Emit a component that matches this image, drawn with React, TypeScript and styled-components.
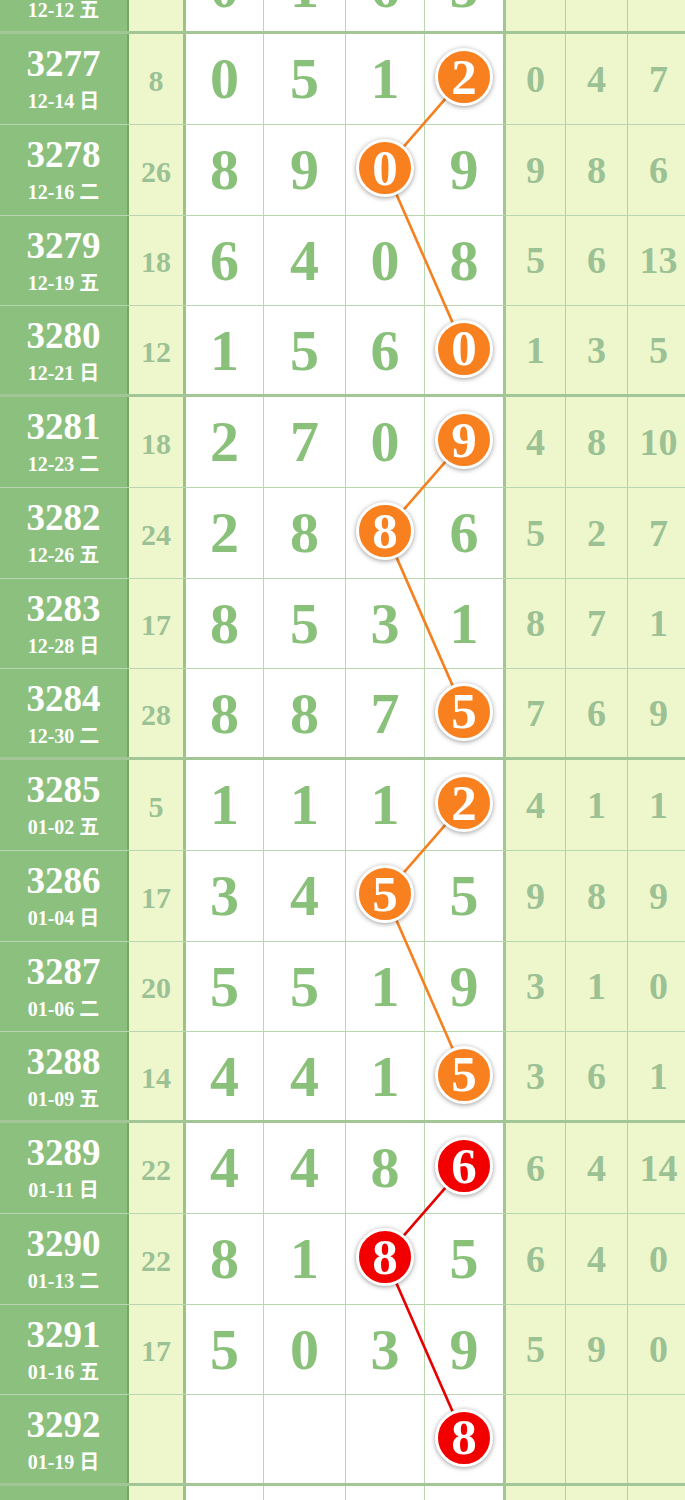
import React from 'react';
import styled, { createGlobalStyle } from 'styled-components';

const GlobalStyle = createGlobalStyle`
  html, body { margin: 0; padding: 0; background: #ffffff; }
  body { font-family: "Liberation Serif", "Noto Sans CJK SC", serif; }
`;

const ROW = 90.75;
const THIN = 'rgba(115, 175, 95, 0.5)';
const THICK = 'rgba(100, 160, 80, 0.6)';
const MAIN_GREEN = '#89c17a';
const MUTED = '#9bc194';
const YELLOW = '#eef7cc';
const SIDE_GREEN = '#8cc07e';

// column centers for digit columns 3 and 4 (in px from left)
const COL_X: Record<number, number> = { 2: 385, 3: 464 };

type RowData = {
  issue: string;
  date: string;
  sum: string;
  digits: string[];
  extra: string[];
  ball?: number; // index of digit column with ball
};

type GroupData = { rows: RowData[]; tone: 'orange' | 'red'; lines: boolean };

const groups: GroupData[] = [
  {
    tone: 'orange',
    lines: false,
    rows: [{ issue: '3276', date: '12-12 五', sum: '12', digits: ['0', '1', '6', '5'], extra: ['7', '6', '7'] }],
  },
  {
    tone: 'orange',
    lines: true,
    rows: [
      { issue: '3277', date: '12-14 日', sum: '8', digits: ['0', '5', '1', '2'], extra: ['0', '4', '7'], ball: 3 },
      { issue: '3278', date: '12-16 二', sum: '26', digits: ['8', '9', '0', '9'], extra: ['9', '8', '6'], ball: 2 },
      { issue: '3279', date: '12-19 五', sum: '18', digits: ['6', '4', '0', '8'], extra: ['5', '6', '13'] },
      { issue: '3280', date: '12-21 日', sum: '12', digits: ['1', '5', '6', '0'], extra: ['1', '3', '5'], ball: 3 },
    ],
  },
  {
    tone: 'orange',
    lines: true,
    rows: [
      { issue: '3281', date: '12-23 二', sum: '18', digits: ['2', '7', '0', '9'], extra: ['4', '8', '10'], ball: 3 },
      { issue: '3282', date: '12-26 五', sum: '24', digits: ['2', '8', '8', '6'], extra: ['5', '2', '7'], ball: 2 },
      { issue: '3283', date: '12-28 日', sum: '17', digits: ['8', '5', '3', '1'], extra: ['8', '7', '1'] },
      { issue: '3284', date: '12-30 二', sum: '28', digits: ['8', '8', '7', '5'], extra: ['7', '6', '9'], ball: 3 },
    ],
  },
  {
    tone: 'orange',
    lines: true,
    rows: [
      { issue: '3285', date: '01-02 五', sum: '5', digits: ['1', '1', '1', '2'], extra: ['4', '1', '1'], ball: 3 },
      { issue: '3286', date: '01-04 日', sum: '17', digits: ['3', '4', '5', '5'], extra: ['9', '8', '9'], ball: 2 },
      { issue: '3287', date: '01-06 二', sum: '20', digits: ['5', '5', '1', '9'], extra: ['3', '1', '0'] },
      { issue: '3288', date: '01-09 五', sum: '14', digits: ['4', '4', '1', '5'], extra: ['3', '6', '1'], ball: 3 },
    ],
  },
  {
    tone: 'red',
    lines: true,
    rows: [
      { issue: '3289', date: '01-11 日', sum: '22', digits: ['4', '4', '8', '6'], extra: ['6', '4', '14'], ball: 3 },
      { issue: '3290', date: '01-13 二', sum: '22', digits: ['8', '1', '8', '5'], extra: ['6', '4', '0'], ball: 2 },
      { issue: '3291', date: '01-16 五', sum: '17', digits: ['5', '0', '3', '9'], extra: ['5', '9', '0'] },
      { issue: '3292', date: '01-19 日', sum: '', digits: ['', '', '', '8'], extra: ['', '', ''], ball: 3 },
    ],
  },
  {
    tone: 'orange',
    lines: false,
    rows: [{ issue: '', date: '', sum: '', digits: ['', '', '', ''], extra: ['', '', ''] }],
  },
];

const Viewport = styled.div`
  width: 685px;
  height: 1500px;
  overflow: hidden;
`;

const Table = styled.div`
  width: 690px;
  margin-top: -56.75px;
  display: flex;
  flex-direction: column;
`;

const Group = styled.div`
  position: relative;
  display: flex;
  flex-direction: column;
`;

const Row = styled.div<{ $end?: boolean }>`
  display: grid;
  grid-template-columns: 129px 57px 78px 82px 79px 81px 60px 62px 62px;
  height: ${ROW}px;
  box-sizing: border-box;
  border-bottom: ${(p) => (p.$end ? `3px solid ${THICK}` : `1px solid ${THIN}`)};
`;

const IssueCell = styled.div`
  background: ${SIDE_GREEN};
  color: #ffffff;
  box-sizing: border-box;
  border-right: 2px solid rgba(90, 145, 75, 0.5);
  display: flex;
  flex-direction: column;
  align-items: center;
  justify-content: center;
  font-weight: bold;
`;

const IssueNo = styled.div`
  font-size: 37px;
  line-height: 40px;
`;

const IssueDate = styled.div`
  font-size: 20px;
  line-height: 24px;
  margin-top: 5px;
  white-space: nowrap;
`;

const SumCell = styled.div`
  background: ${YELLOW};
  color: ${MUTED};
  box-sizing: border-box;
  border-right: 3px solid ${THICK};
  display: flex;
  align-items: center;
  justify-content: center;
  font-size: 30px;
  font-weight: bold;
  padding-top: 4px;
`;

const DigitCell = styled.div<{ $edge?: boolean }>`
  background: #ffffff;
  color: ${MAIN_GREEN};
  box-sizing: border-box;
  border-right: ${(p) => (p.$edge ? `3px solid ${THICK}` : `1px solid ${THIN}`)};
  display: flex;
  align-items: center;
  justify-content: center;
  font-size: 58px;
  font-weight: bold;
`;

const ExtraCell = styled.div`
  background: ${YELLOW};
  color: ${MUTED};
  box-sizing: border-box;
  border-right: 1px solid ${THIN};
  display: flex;
  align-items: center;
  justify-content: center;
  font-size: 38px;
  font-weight: bold;
`;

const Ball = styled.div<{ $tone: 'orange' | 'red' }>`
  position: relative;
  z-index: 2;
  width: 58px;
  height: 58px;
  box-sizing: border-box;
  border-radius: 50%;
  border: 3px solid #ffffff;
  background: ${(p) => (p.$tone === 'red' ? '#f20000' : '#f9801f')};
  box-shadow: 0 1px 5px rgba(0, 0, 0, 0.4);
  color: #ffffff;
  display: flex;
  align-items: center;
  justify-content: center;
  font-size: 51px;
  font-weight: bold;
  line-height: 1;
  margin-bottom: 3px;
`;

const Lines = styled.svg`
  position: absolute;
  left: 0;
  top: 0;
  z-index: 1;
  pointer-events: none;
`;

function rowCenter(i: number, count: number) {
  const border = i === count - 1 ? 3 : 1;
  return i * ROW + (ROW - border) / 2 - 1.5;
}

function GroupBlock({ g }: { g: GroupData }) {
  const pts = g.rows
    .map((r, i) => (r.ball !== undefined ? { x: COL_X[r.ball], y: rowCenter(i, g.rows.length) } : null))
    .filter(Boolean) as { x: number; y: number }[];
  const stroke = g.tone === 'red' ? '#e80000' : '#f5801f';
  return (
    <Group>
      {g.rows.map((r, i) => (
        <Row key={i} $end={i === g.rows.length - 1}>
          <IssueCell>
            {r.issue && <IssueNo>{r.issue}</IssueNo>}
            {r.date && <IssueDate>{r.date}</IssueDate>}
          </IssueCell>
          <SumCell>{r.sum}</SumCell>
          {r.digits.map((d, j) => (
            <DigitCell key={j} $edge={j === 3}>
              {r.ball === j ? <Ball $tone={g.tone}>{d}</Ball> : d}
            </DigitCell>
          ))}
          {r.extra.map((e, j) => (
            <ExtraCell key={j}>{e}</ExtraCell>
          ))}
        </Row>
      ))}
      {g.lines && pts.length > 1 && (
        <Lines width={690} height={ROW * g.rows.length}>
          {pts.slice(1).map((p, k) => (
            <line
              key={k}
              x1={pts[k].x}
              y1={pts[k].y}
              x2={p.x}
              y2={p.y}
              stroke={stroke}
              strokeWidth={2.6}
            />
          ))}
        </Lines>
      )}
    </Group>
  );
}

export default function App() {
  return (
    <>
      <GlobalStyle />
      <Viewport>
        <Table>
          {groups.map((g, i) => (
            <GroupBlock key={i} g={g} />
          ))}
        </Table>
      </Viewport>
    </>
  );
}
